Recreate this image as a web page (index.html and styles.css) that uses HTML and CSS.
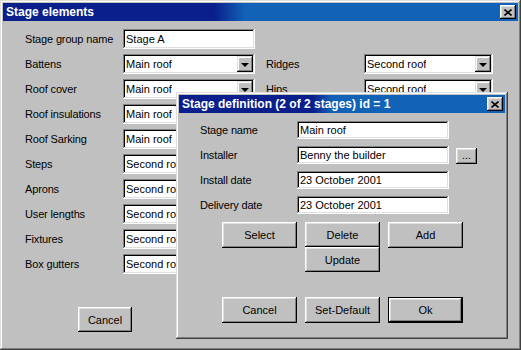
FILE: index.html
```html
<!DOCTYPE html>
<html>
<head>
<meta charset="utf-8">
<link rel="stylesheet" href="styles.css">
</head>
<body>
<div class="window main">
  <div class="titlebar">
    <span class="title">Stage elements</span>
    <span class="close"><svg width="8" height="7" viewBox="0 0 8 7"><path d="M0.5 0.5L7.5 6.5M7.5 0.5L0.5 6.5" stroke="#000" stroke-width="1.6" fill="none"/></svg></span>
  </div>
  <div class="main-body">
    <div class="form-grid">
      <span class="lbl l1">Stage group name</span>
      <span class="field f1">Stage A</span>

      <span class="lbl l1">Battens</span>
      <span class="field combo f1"><span class="val">Main roof</span><span class="drop"><i></i></span></span>
      <span class="lbl l2">Ridges</span>
      <span class="field combo f2"><span class="val">Second roof</span><span class="drop"><i></i></span></span>

      <span class="lbl l1">Roof cover</span>
      <span class="field combo f1"><span class="val">Main roof</span><span class="drop"><i></i></span></span>
      <span class="lbl l2">Hips</span>
      <span class="field combo f2"><span class="val">Second roof</span><span class="drop"><i></i></span></span>

      <span class="lbl l1">Roof insulations</span>
      <span class="field combo f1"><span class="val">Main roof</span><span class="drop"><i></i></span></span>

      <span class="lbl l1">Roof Sarking</span>
      <span class="field combo f1"><span class="val">Main roof</span><span class="drop"><i></i></span></span>

      <span class="lbl l1">Steps</span>
      <span class="field combo f1"><span class="val">Second roof</span><span class="drop"><i></i></span></span>

      <span class="lbl l1">Aprons</span>
      <span class="field combo f1"><span class="val">Second roof</span><span class="drop"><i></i></span></span>

      <span class="lbl l1">User lengths</span>
      <span class="field combo f1"><span class="val">Second roof</span><span class="drop"><i></i></span></span>

      <span class="lbl l1">Fixtures</span>
      <span class="field combo f1"><span class="val">Second roof</span><span class="drop"><i></i></span></span>

      <span class="lbl l1">Box gutters</span>
      <span class="field combo f1"><span class="val">Second roof</span><span class="drop"><i></i></span></span>
    </div>
    <span class="btn main-cancel">Cancel</span>
  </div>

  <div class="window dialog">
    <div class="titlebar">
      <span class="title">Stage definition (2 of 2 stages) id = 1</span>
      <span class="close"><svg width="8" height="7" viewBox="0 0 8 7"><path d="M0.5 0.5L7.5 6.5M7.5 0.5L0.5 6.5" stroke="#000" stroke-width="1.6" fill="none"/></svg></span>
    </div>
    <div class="dlg-body">
      <div class="dlg-grid">
        <span class="lbl">Stage name</span>
        <span class="field">Main roof</span>
        <span></span>
        <span class="lbl">Installer</span>
        <span class="field">Benny the builder</span>
        <span class="btn dots">...</span>
        <span class="lbl">Install date</span>
        <span class="field">23 October 2001</span>
        <span></span>
        <span class="lbl">Delivery date</span>
        <span class="field">23 October 2001</span>
        <span></span>
      </div>
      <div class="btn-grid">
        <span class="btn b-select">Select</span>
        <span class="btn b-delete">Delete</span>
        <span class="btn b-add">Add</span>
        <span class="btn b-update">Update</span>
        <span class="btn b-cancel">Cancel</span>
        <span class="btn b-default">Set-Default</span>
        <span class="btn b-ok">Ok</span>
      </div>
    </div>
  </div>
</div>
</body>
</html>
```

FILE: styles.css
```css
* { box-sizing: border-box; }
html, body {
  margin: 0;
  padding: 0;
  background: #c0c0c0;
}
body {
  font-family: "Liberation Sans", Arial, sans-serif;
  font-size: 11px;
  color: #000;
}
.window {
  background: #c0c0c0;
  padding: 3px;
  box-shadow: inset -1px -1px #404040, inset 1px 1px #dfdfdf, inset -2px -2px #808080, inset 2px 2px #ffffff;
}
.main {
  position: relative;
  width: 521px;
  height: 350px;
}
.titlebar {
  height: 18px;
  display: flex;
  align-items: center;
  justify-content: space-between;
  padding: 0 2px 0 3px;
  background: linear-gradient(to right, #0a1f8c 0%, #0a1f8c 41%, #1262b8 47%, #1262b8 100%);
}
.title {
  color: #fff;
  font-weight: bold;
  font-size: 12px;
  white-space: nowrap;
}
.close {
  width: 16px;
  height: 14px;
  background: #c0c0c0;
  display: flex;
  align-items: center;
  justify-content: center;
  box-shadow: inset -1px -1px #000, inset 1px 1px #fff, inset -2px -2px #808080, inset 2px 2px #dfdfdf;
}
.main-body {
  padding: 8px 0 0 22px;
  display: flex;
  flex-direction: column;
  align-items: flex-start;
}
.form-grid {
  display: grid;
  grid-template-columns: 98px 132px 11px 98px 129px;
  grid-auto-rows: 20px;
  row-gap: 5px;
}
.l1 { grid-column: 1; }
.f1 { grid-column: 2; }
.l2 { grid-column: 4; }
.f2 { grid-column: 5; }
.lbl {
  display: flex;
  align-items: center;
  white-space: nowrap;
  letter-spacing: -0.15px;
}
.field {
  background: #fff;
  display: flex;
  align-items: center;
  padding: 0 3px;
  white-space: nowrap;
  overflow: hidden;
  box-shadow: inset -1px -1px #fff, inset 1px 1px #808080, inset -2px -2px #dfdfdf, inset 2px 2px #000;
}
.combo {
  padding: 2px 2px 2px 3px;
  justify-content: space-between;
}
.combo .val {
  overflow: hidden;
}
.drop {
  flex: none;
  width: 16px;
  height: 16px;
  background: #c0c0c0;
  display: flex;
  align-items: center;
  justify-content: center;
  box-shadow: inset -1px -1px #000, inset 1px 1px #dfdfdf, inset -2px -2px #808080, inset 2px 2px #fff;
}
.drop i {
  width: 0;
  height: 0;
  border-left: 4px solid transparent;
  border-right: 4px solid transparent;
  border-top: 4px solid #000;
  margin-top: 1px;
}
.btn {
  display: flex;
  align-items: center;
  justify-content: center;
  background: #c0c0c0;
  white-space: nowrap;
  box-shadow: inset -1px -1px #000, inset 1px 1px #fff, inset -2px -2px #808080, inset 2px 2px #dfdfdf;
}
.main-cancel {
  width: 54px;
  height: 25px;
  margin: 33px 0 0 53px;
}
.dialog {
  position: absolute;
  left: 176px;
  top: 92px;
  width: 332px;
  height: 247px;
  z-index: 2;
}
.dlg-body {
  padding: 8px 0 0 21px;
}
.dlg-grid {
  display: grid;
  grid-template-columns: 90px 152px 21px;
  column-gap: 7px;
  grid-auto-rows: 18px;
  row-gap: 7px;
}
.dlg-grid .field {
  padding-left: 3px;
}
.dots {
  height: 16px;
  align-self: center;
  margin-top: 2px;
  padding-bottom: 3px;
}
.btn-grid {
  display: grid;
  grid-template-columns: 75px 75px 75px;
  column-gap: 8px;
  grid-template-rows: 25px 25px 25px 26px;
  margin: 8px 0 0 22px;
}
.b-select { grid-column: 1; grid-row: 1; height: 26px; }
.b-delete { grid-column: 2; grid-row: 1; }
.b-add { grid-column: 3; grid-row: 1; height: 26px; }
.b-update { grid-column: 2; grid-row: 2; }
.b-cancel { grid-column: 1; grid-row: 4; }
.b-default { grid-column: 2; grid-row: 4; }
.b-ok {
  grid-column: 3;
  grid-row: 4;
  border: 1px solid #000;
}
```
